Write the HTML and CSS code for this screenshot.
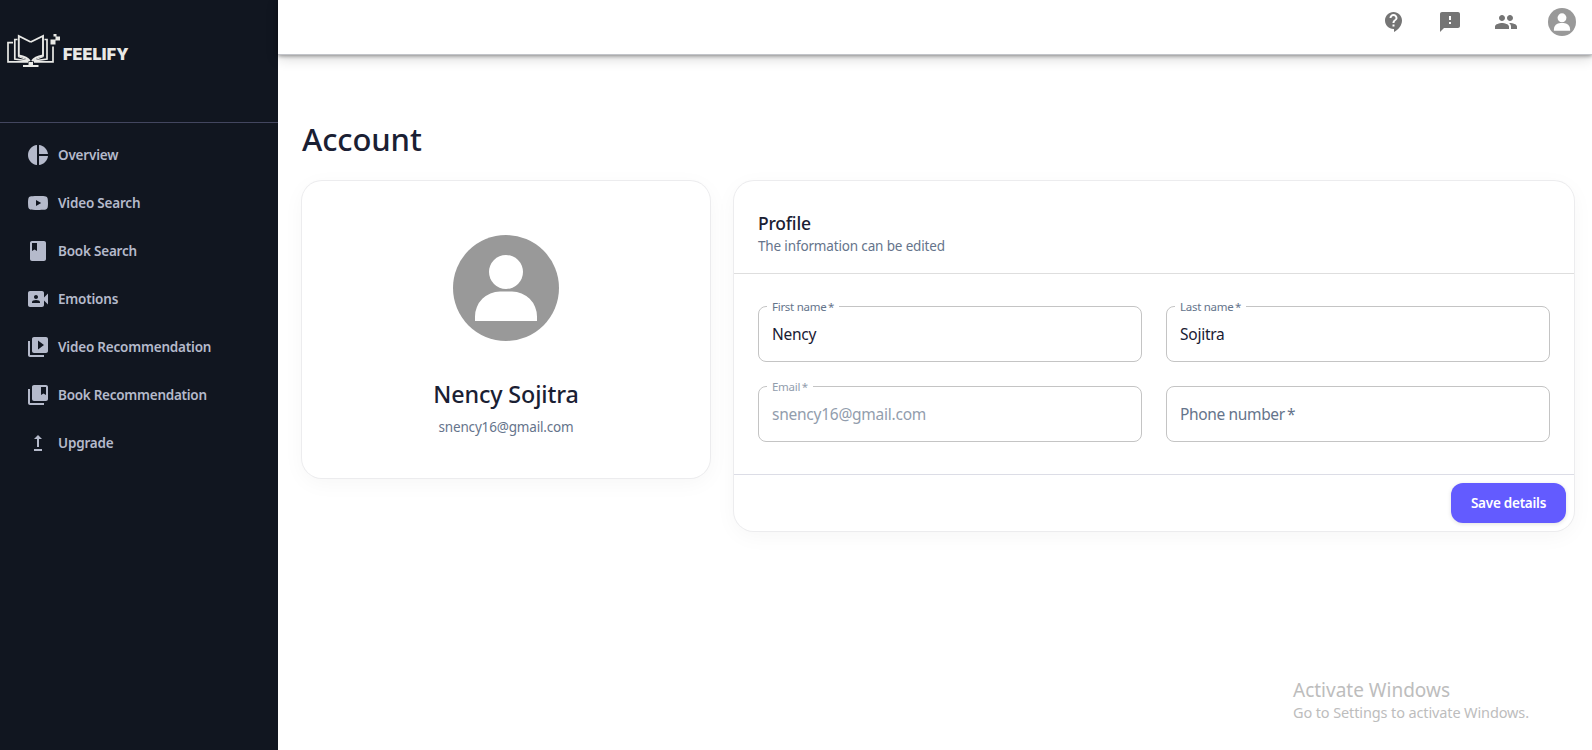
FILE: index.html
```html
<!DOCTYPE html>
<html lang="en">
<head>
<meta charset="utf-8">
<title>Account</title>
<link rel="stylesheet" href="styles.css">
</head>
<body>
<aside class="sidebar">
  <div class="brand">
    <svg class="brand-mark" width="56" height="36" viewBox="0 0 56 36" fill="none" stroke="#e9e9e6" stroke-width="1.700">
      <path d="M6 9.700H1v19.200H21M10.500 6.500H7.800V26l14 2"/>
      <path d="M37.500 6.500H40V26l-13.500 2M46 13.500v15.400H27"/>
      <path stroke-width="1.900" d="M23.700 9 11.800 3v19.500c5 1 9 2.500 11 5.500M23.700 9 36 3v19.500c-5 1-9 2.500-11 5.500"/>
      <path stroke-width="1.200" d="M11 23.500 22 27.500M36.500 23.500 26 27.500"/>
      <path stroke-width="2" d="M16 33h15.500"/>
      <path fill="#e9e9e6" stroke="none" d="M21.500 29h4.500v3.500h-4.500zM43.500 6.500h5v5h-5zM48.500 3.500h4.500v4h-4.500zM46.500 1h3v2.500h-3z"/>
    </svg>
    <span class="brand-name">FEELIFY</span>
  </div>
  <nav class="nav">
    <a class="nav-item"><svg class="icon" viewBox="0 0 24 24"><path d="M11 2v20c-5.070-.5-9-4.790-9-10s3.930-9.500 9-10zm2.030 0v8.990H22c-.47-4.740-4.240-8.520-8.970-8.990zm0 11.010V22c4.740-.47 8.500-4.250 8.970-8.990h-8.970z"/></svg><span>Overview</span></a>
    <a class="nav-item"><svg class="icon" viewBox="0 0 24 24"><path d="M10 15l5.190-3L10 9v6m11.560-7.830c.13.470.22 1.100.28 1.900.07.800.1 1.490.1 2.090L22 12c0 2.190-.16 3.800-.44 4.830-.25.900-.83 1.480-1.730 1.730-.47.130-1.330.22-2.650.28-1.300.07-2.490.1-3.590.1L12 19c-4.190 0-6.800-.16-7.830-.44-.9-.25-1.480-.83-1.730-1.730-.13-.47-.22-1.100-.28-1.900-.07-.8-.1-1.490-.1-2.090L2 12c0-2.190.16-3.800.44-4.830.25-.9.83-1.480 1.730-1.730.47-.13 1.330-.22 2.650-.28 1.300-.07 2.490-.1 3.590-.1L12 5c4.190 0 6.800.16 7.830.44.900.25 1.480.83 1.730 1.730z"/></svg><span>Video Search</span></a>
    <a class="nav-item"><svg class="icon" viewBox="0 0 24 24"><path d="M18 2H6c-1.100 0-2 .9-2 2v16c0 1.100.9 2 2 2h12c1.100 0 2-.9 2-2V4c0-1.100-.9-2-2-2zM6 4h5v8l-2.500-1.500L6 12V4z"/></svg><span>Book Search</span></a>
    <a class="nav-item"><svg class="icon" viewBox="0 0 24 24"><path d="M18 10.480V6c0-1.100-.9-2-2-2H4c-1.100 0-2 .9-2 2v12c0 1.100.9 2 2 2h12c1.100 0 2-.9 2-2v-4.480l4 3.980v-11l-4 3.980zM10 8c1.100 0 2 .9 2 2s-.9 2-2 2-2-.9-2-2 .9-2 2-2zm4 8H6v-.57c0-.81.480-1.530 1.220-1.850.85-.37 1.790-.58 2.780-.58.990 0 1.930.21 2.780.58.740.32 1.220 1.040 1.220 1.850V16z"/></svg><span>Emotions</span></a>
    <a class="nav-item"><svg class="icon" viewBox="0 0 24 24"><path d="M4 6H2v14c0 1.100.9 2 2 2h14v-2H4V6zm16-4H8c-1.100 0-2 .9-2 2v12c0 1.100.9 2 2 2h12c1.100 0 2-.9 2-2V4c0-1.100-.9-2-2-2zm-8 12.500v-9l6 4.500-6 4.500z"/></svg><span>Video Recommendation</span></a>
    <a class="nav-item"><svg class="icon" viewBox="0 0 24 24"><path d="M4 6H2v14c0 1.100.9 2 2 2h14v-2H4V6zm16-4H8c-1.100 0-2 .9-2 2v12c0 1.100.9 2 2 2h12c1.100 0 2-.9 2-2V4c0-1.100-.9-2-2-2zm0 10l-2.500-1.500L15 12V4h5v8z"/></svg><span class="tight">Book Recommendation</span></a>
    <a class="nav-item"><svg class="icon" viewBox="0 0 24 24"><path d="M16 18v2H8v-2h8zM11 7.990V16h2V7.990h3L12 4 8 7.990h3z"/></svg><span>Upgrade</span></a>
  </nav>
</aside>
<div class="page">
  <header class="topbar">
    <svg class="top-icon" viewBox="0 0 24 24"><path d="M11.500 2C6.810 2 3 5.810 3 10.500S6.810 19 11.500 19h.5v3c4.860-2.340 8-7 8-11.500C20 5.810 16.190 2 11.500 2zm1 14.500h-2v-2h2v2zm0-3.500h-2c0-3.250 3-3 3-5 0-1.100-.9-2-2-2s-2 .9-2 2h-2c0-2.210 1.790-4 4-4s4 1.790 4 4c0 2.500-3 2.750-3 5z"/></svg>
    <svg class="top-icon" viewBox="0 0 24 24"><path d="M20 2H4c-1.100 0-1.990.9-1.990 2L2 22l4-4h14c1.100 0 2-.9 2-2V4c0-1.100-.9-2-2-2zm-7 12h-2v-2h2v2zm0-4h-2V6h2v4z"/></svg>
    <svg class="top-icon" viewBox="0 0 24 24"><path d="M16 11c1.660 0 2.990-1.340 2.990-3S17.660 5 16 5c-1.660 0-3 1.340-3 3s1.340 3 3 3zm-8 0c1.660 0 2.990-1.340 2.990-3S9.660 5 8 5C6.340 5 5 6.340 5 8s1.340 3 3 3zm0 2c-2.330 0-7 1.170-7 3.500V19h14v-2.500c0-2.330-4.670-3.500-7-3.500zm8 0c-.29 0-.62.020-.97.050 1.160.840 1.970 1.970 1.970 3.450V19h6v-2.500c0-2.330-4.670-3.500-7-3.500z"/></svg>
    <svg class="avatar-small" viewBox="0 0 107 107"><circle cx="53.500" cy="53.500" r="53.500" fill="#999"/><circle cx="53.500" cy="37.500" r="17" fill="#fff"/><path fill="#fff" d="M22.500 87V82A25 25 0 0 1 47.500 57H59.500A25 25 0 0 1 84.500 82V87z"/></svg>
  </header>
  <main class="content">
    <h1 class="title">Account</h1>
    <div class="cards">
      <section class="card person">
        <svg class="avatar" viewBox="0 0 107 107"><circle cx="53" cy="54" r="53" fill="#999"/><circle cx="53" cy="38" r="17" fill="#fff"/><path fill="#fff" d="M22 87V82.500A25 25 0 0 1 47 57.500H59A25 25 0 0 1 84 82.500V87z"/></svg>
        <h2 class="person-name">Nency Sojitra</h2>
        <p class="person-mail">snency16@gmail.com</p>
      </section>
      <section class="card profile">
        <div class="profile-head">
          <h3 class="profile-title">Profile</h3>
          <p class="profile-sub">The information can be edited</p>
        </div>
        <div class="fields">
          <div class="field"><label class="label">First name&thinsp;*</label>Nency</div>
          <div class="field"><label class="label">Last name&thinsp;*</label>Sojitra</div>
          <div class="field disabled"><label class="label">Email&thinsp;*</label>snency16@gmail.com</div>
          <div class="field empty">Phone number&thinsp;*</div>
        </div>
        <div class="actions"><button class="save">Save details</button></div>
      </section>
    </div>
  </main>
</div>
<div class="watermark">
  <p class="wm-title">Activate Windows</p>
  <p class="wm-text">Go to Settings to activate Windows.</p>
</div>
</body>
</html>
```

FILE: styles.css
```css
* { box-sizing: border-box; }
body {
  margin: 0;
  height: 750px;
  display: flex;
  overflow: hidden;
  background: #fff;
  font-family: "Noto Sans", "Open Sans", sans-serif;
  color: #1a2033;
}
h1, h2, h3, p { margin: 0; }
span, p, label { white-space: nowrap; }

.sidebar { width: 278px; height: 750px; background: #111620; flex: none; }
.brand {
  display: flex;
  height: 123px;
  padding: 33px 0 0 7px;
  border-bottom: 1px solid #43465f;
}
.brand-mark { flex: none; }
.brand-name {
  font: 900 16px/20px Inter, sans-serif;
  color: #e9e9e6;
  margin-top: 11px;
  letter-spacing: .2px;
}
.nav { display: flex; flex-direction: column; padding: 8px 0 0 26px; }
.nav-item {
  display: flex;
  align-items: center;
  gap: 8px;
  height: 48px;
  font-size: 13.500px;
  font-weight: 600;
  letter-spacing: -.2px;
  color: #b5bacb;
}
.tight { letter-spacing: -.26px; }
.icon { width: 24px; height: 24px; fill: #b5bacb; }

.page { flex: 1; min-width: 0; }
.topbar {
  display: flex;
  justify-content: flex-end;
  gap: 32px;
  height: 55px;
  padding: 10px 16px 0 0;
  border-bottom: 1px solid #c2c4c9;
  box-shadow: 0 1px 4px rgba(0, 0, 0, .4), 0 4px 12px rgba(0, 0, 0, .15);
}
.top-icon { width: 24px; height: 24px; fill: #757575; }
.avatar-small { width: 28px; height: 28px; margin: -2px 0 0 -2px; }

.content { padding: 60px 18px 0 24px; }
.title { font-size: 31px; font-weight: 500; line-height: 48px; letter-spacing: -.1px; }
.cards { display: flex; gap: 24px; align-items: flex-start; margin-top: 18px; }
.card {
  border-radius: 20px;
  background: #fff;
  box-shadow: 0 0 0 1px #ececee, 0 5px 22px rgba(0, 0, 0, .04);
}
.person {
  width: 408px;
  height: 297px;
  padding-top: 53px;
  display: flex;
  flex-direction: column;
  align-items: center;
}
.avatar { width: 107px; height: 107px; }
.person-name { font-size: 23.300px; font-weight: 500; line-height: 30px; margin-top: 38px; letter-spacing: -.14px; }
.person-mail { font-size: 13.500px; line-height: 22px; margin-top: 7px; letter-spacing: -.17px; color: #65748b; }
.profile { width: 840px; height: 350px; }
.profile-head { height: 93px; padding: 31px 24px 0; border-bottom: 1px solid #dedede; }
.profile-title { font-size: 17.500px; font-weight: 500; line-height: 22px; letter-spacing: -.2px; }
.profile-sub { font-size: 13.500px; line-height: 20px; margin-top: 2px; letter-spacing: -.15px; color: #65748b; }
.fields {
  display: grid;
  grid-template-columns: 384px 384px;
  gap: 24px;
  padding: 32px 24px;
  height: 200px;
}
.field {
  position: relative;
  height: 56px;
  padding: 0 13px;
  border: 1px solid #c4c4c4;
  border-radius: 8px;
  font-size: 15.500px;
  line-height: 55px;
  letter-spacing: -.25px;
}
.label {
  position: absolute;
  left: 8px;
  top: -8px;
  padding: 0 5px;
  background: #fff;
  font-size: 11.500px;
  line-height: 16px;
  letter-spacing: -.28px;
  color: #65748b;
}
.disabled, .disabled .label { color: #929dad; }
.empty { color: #65748b; letter-spacing: -.35px; }
.actions {
  display: flex;
  justify-content: flex-end;
  height: 57px;
  padding: 8px;
  border-top: 1px solid #dcdde6;
}
.save {
  width: 115px;
  height: 40px;
  padding: 0;
  border: 0;
  border-radius: 12px;
  background: #635bff;
  color: #fff;
  font: 600 13.500px/40px "Noto Sans", sans-serif;
  letter-spacing: -.25px;
  box-shadow: 0 1px 4px rgba(0, 0, 0, .12);
}
.watermark { position: absolute; left: 1293px; top: 677px; color: #bdbdbd; }
.wm-title { font-size: 19px; line-height: 27px; }
.wm-text { font-size: 14.500px; line-height: 17px; letter-spacing: -.12px; }
```
